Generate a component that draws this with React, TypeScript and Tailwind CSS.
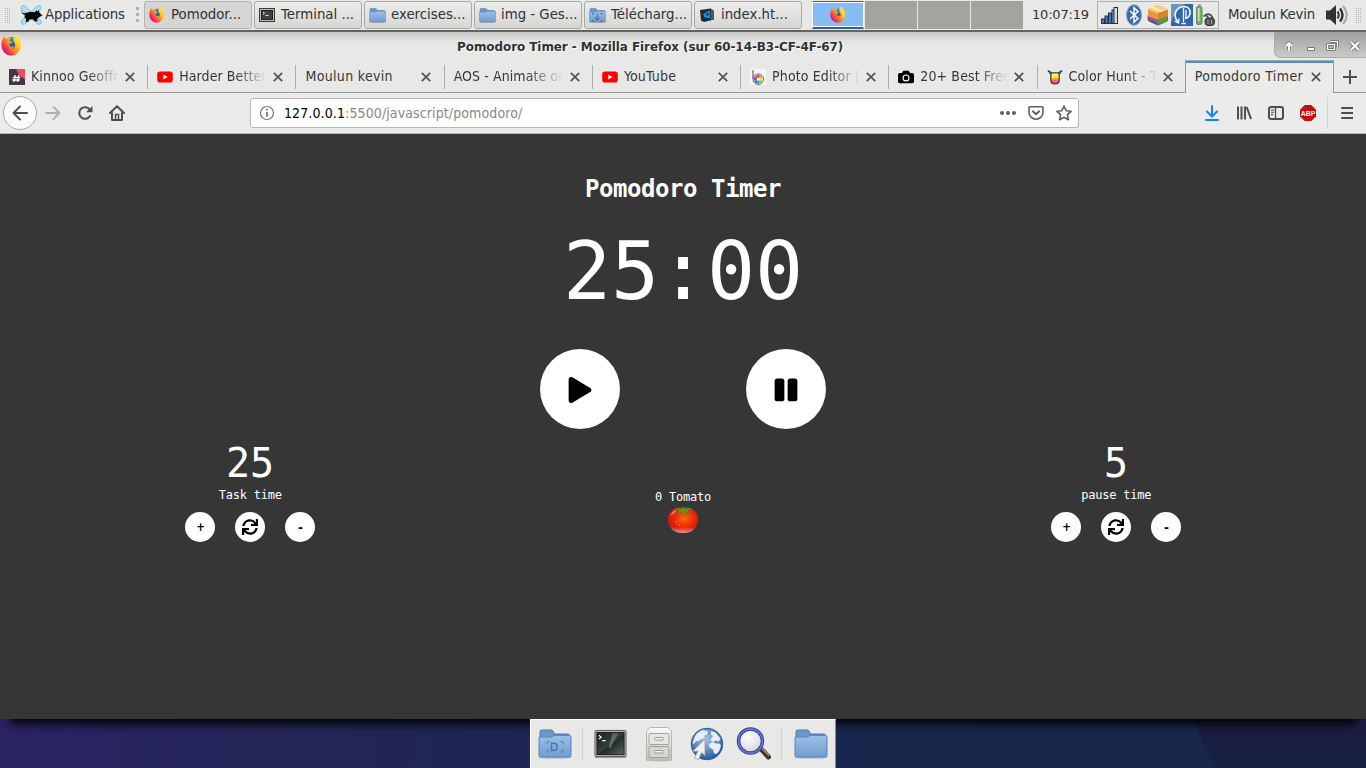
import React from "react";
import { FaPlay, FaPause, FaSync } from "react-icons/fa";

type Cls = { className?: string };

function Defs() {
  return (
    <svg className="absolute h-0 w-0" aria-hidden="true">
      <defs>
        <linearGradient id="ffOuter" x1="0.85" y1="0.1" x2="0.1" y2="0.8">
          <stop offset="0" stopColor="#fff04a" />
          <stop offset="0.35" stopColor="#ffc01e" />
          <stop offset="0.62" stopColor="#ff7a24" />
          <stop offset="0.85" stopColor="#fa2a5c" />
          <stop offset="1" stopColor="#d0108c" />
        </linearGradient>
        <linearGradient id="ffGlobe" x1="0" y1="0" x2="0.4" y2="1">
          <stop offset="0" stopColor="#12a0f0" />
          <stop offset="1" stopColor="#1a3cb0" />
        </linearGradient>
        <linearGradient id="folderFront" x1="0" y1="0" x2="0" y2="1">
          <stop offset="0" stopColor="#9dbfe6" />
          <stop offset="1" stopColor="#719dd0" />
        </linearGradient>
        <linearGradient id="termScreen" x1="0" y1="0" x2="1" y2="1">
          <stop offset="0" stopColor="#1a1f1e" />
          <stop offset="0.5" stopColor="#34403d" />
          <stop offset="0.55" stopColor="#222a28" />
          <stop offset="1" stopColor="#5b6965" />
        </linearGradient>
        <linearGradient id="cabinet" x1="0" y1="0" x2="0" y2="1">
          <stop offset="0" stopColor="#fafaf9" />
          <stop offset="1" stopColor="#bfc0bb" />
        </linearGradient>
        <radialGradient id="globe" cx="0.45" cy="0.35" r="0.65">
          <stop offset="0" stopColor="#a9c6e6" />
          <stop offset="0.6" stopColor="#5b87bd" />
          <stop offset="1" stopColor="#27559a" />
        </radialGradient>
        <radialGradient id="lens" cx="0.4" cy="0.35" r="0.7">
          <stop offset="0" stopColor="#ffffff" />
          <stop offset="1" stopColor="#cfd3d6" />
        </radialGradient>
        <radialGradient id="tomato" cx="0.55" cy="0.42" r="0.6">
          <stop offset="0" stopColor="#ff6a0c" />
          <stop offset="0.5" stopColor="#f32c08" />
          <stop offset="0.85" stopColor="#d81607" />
          <stop offset="1" stopColor="#b33a30" />
        </radialGradient>
        <linearGradient id="tomatoGloss" x1="0" y1="0" x2="0" y2="1">
          <stop offset="0.5" stopColor="#fff" stopOpacity="0" />
          <stop offset="1" stopColor="#fff" stopOpacity="0.55" />
        </linearGradient>
        <linearGradient id="hunt" x1="0" y1="0" x2="0" y2="1">
          <stop offset="0.4" stopColor="#fff200" />
          <stop offset="0.5" stopColor="#ffa02f" />
          <stop offset="0.8" stopColor="#ff4a78" />
        </linearGradient>
      </defs>
    </svg>
  );
}

function Firefox({ className }: Cls) {
  return (
    <svg viewBox="0 0 20 20" className={className}>
      <circle cx="10.3" cy="9" r="7.2" fill="url(#ffGlobe)" />
      <path d="M1.8 3.2C2 2 2.6 1.4 3 1.2c.1 1 .6 1.700 1.100 2.100 1-.4 2-.5 3-.1 1.200-.6 2.400-.5 3-.3-1 .6-1.700 1.300-1.700 2.400 .2.8 1.400.9 2.600 1-.1 1.100-1.300 1.500-2.300 2.100-.8.500-.7 1.400-.1 2.100 1.300 1.200 3.200-.2 4.600.600-1 .2-1.500 1.600-3.200 2 2.800.3 4-2 3.200-4.800-.5-1.600-1.900-2.500-1.700-4.600.1-2.200 1.300-4.200 2.700-5.600 0 1.800 1.200 3.100 2.300 4.300 1.300 1.700 2.400 3.700 2.400 6.200A9.600 9.600 0 0 1 10 19.600 9.600 9.600 0 0 1 .4 10C.4 7.300.8 4.800 1.800 3.200z" fill="url(#ffOuter)" />
    </svg>
  );
}

function Folder({ className, mark }: Cls & { mark?: "down" | "desk" }) {
  return (
    <svg viewBox="0 0 34 30" className={className}>
      <ellipse cx="17" cy="28.500" rx="16" ry="1.300" fill="#000" opacity=".2" />
      <path d="M2 7V3Q2 1 4 1H13Q15 1 15.500 3L16.500 5H30Q31.500 5 31.500 7V10H2z" fill="#6d97cb" stroke="#4a78b4" />
      <path d="M1 9Q1 8 2.200 8H12.500Q14 8 14.800 7.200T17 6.400H31.500Q33 6.400 33 8V26.500Q33 28 31.500 28H2.500Q1 28 1 26.500z" fill="url(#folderFront)" stroke="#5284c0" />
      {mark === "down" && <path d="M16.500 11v13M11 18.500l5.500 6 5.500-6M7 13v-2h3M7 24v2h3M26 13v-2h-3M26 24v2h-3" fill="none" stroke="#3568ab" strokeWidth="2" />}
      {mark === "desk" && (
        <g fill="none" stroke="#4579ba">
          <path d="M13.500 14.200h2.700q3 0 3 3.600t-3 3.600h-2.700z" strokeWidth="1.600" />
          <path d="M9 15v-2.500h2.500M9 20.500V23h2.500M25 15v-2.500h-2.500M25 20.500V23h-2.500" strokeWidth="1" strokeDasharray="2 1" />
        </g>
      )}
    </svg>
  );
}

function Terminal({ className }: Cls) {
  return (
    <svg viewBox="0 0 34 30" className={className}>
      <rect x="1" y="27" width="32" height="2.500" fill="#000" opacity=".3" />
      <rect x="1" y="1" width="32" height="27" rx="1" fill="#c3c4bf" stroke="#555753" />
      <rect x="3" y="3" width="28" height="23" fill="url(#termScreen)" stroke="#191b1a" />
      <path d="M15 19L19 4h6L17 19z" fill="#8b9996" opacity=".5" />
      <path d="M5 6l2.500 2L5 10M8.500 11.500h3.500" stroke="#fff" strokeWidth="1.200" fill="none" />
    </svg>
  );
}

function SmallTerminal({ className }: Cls) {
  return (
    <svg viewBox="0 0 16 14" className={className}>
      <rect x=".5" y=".5" width="15" height="13" fill="#babbb7" stroke="#3a3c3a" />
      <rect x="2.500" y="2.500" width="11" height="9" fill="#39423f" stroke="#1d2221" />
      <path d="M4 4l1.500 1.200L4 6.500M6.500 7.500h3" stroke="#fff" fill="none" strokeWidth=".9" />
    </svg>
  );
}

function XfceMouse({ className }: Cls) {
  return (
    <svg viewBox="0 0 22 20" className={className}>
      <path d="M3 3L18.500 17M18 3L3 17" stroke="#7cc7ea" strokeWidth="5.600" strokeLinecap="round" />
      <path d="M3 3L18.500 17M18 3L3 17" stroke="#b6e2f5" strokeWidth="3.200" strokeLinecap="round" />
      <path d="M.5 4.500C1 8 3 8.600 5 8.200 8 6.500 12 7 14.500 7L16 5l1 1.500 1.500-1.500.3 2.500L22 10.500l-3.500 1.700-2 1.800.8 2.300H14l-1.500-2-3.500.2-1 2.300H5l.7-2.700L4 12.500 4.300 10C2 9.500.5 7.500.5 4.500z" fill="#070707" />
    </svg>
  );
}

function YouTube({ className }: Cls) {
  return (
    <svg viewBox="0 0 16 12" className={className}>
      <rect x=".2" y=".4" width="15.600" height="11.200" rx="2.800" fill="#f00" />
      <path d="M6.300 3.600v4.800L10.500 6z" fill="#fff" />
    </svg>
  );
}

function Close() {
  return (
    <svg viewBox="0 0 10 10" className="h-[10px] w-[10px] shrink-0">
      <path d="M.8.8l8.400 8.400M9.200.8L.8 9.200" stroke="#4f5457" strokeWidth="1.700" />
    </svg>
  );
}

function HashIcon() {
  return (
    <svg viewBox="0 0 16 16" className="h-4 w-4">
      <path d="M0 0h16v16H0z" fill="#47344c" />
      <path d="M7 0h9v10.500C12 8 9 5 7 0z" fill="#f04c5b" />
      <path d="M6.300 6L5 13M9.800 6L8.500 13M3.800 8.500h7.500M3.300 11h7.500" stroke="#fff" strokeWidth="1.300" />
    </svg>
  );
}

function BeFunky() {
  const petals = ["#ef4136", "#f7941d", "#ffe400", "#8cc63f", "#00a99d", "#2e7bd6", "#7b3fb5", "#e83e9c"];
  return (
    <svg viewBox="0 0 16 16" className="h-4 w-4">
      <path d="M0 0h16v16H0z" fill="#f6f6fa" />
      <path d="M3 1v9" stroke="#444" strokeWidth="1" />
      <circle cx="8.300" cy="10.200" r="5.300" fill="#fff" stroke="#444" strokeWidth=".8" />
      {petals.map((c, i) => (
        <path key={c} d="M8.300 10.200L6.700 6.100A4.400 4.400 0 0 1 10 6.100z" fill={c} transform={`rotate(${i * 45} 8.300 10.200)`} />
      ))}
      <circle cx="8.300" cy="10.200" r="1.500" fill="#fff" />
    </svg>
  );
}

function CameraIcon() {
  return (
    <svg viewBox="0 0 18 16" className="h-4 w-[18px]">
      <path d="M6 1h6l1.500 2.500H16q2 0 2 2V13q0 2-2 2H2q-2 0-2-2V5.500q0-2 2-2h2.500z" fill="#000" />
      <circle cx="9" cy="9" r="3.300" fill="none" stroke="#fff" strokeWidth="1.300" />
    </svg>
  );
}

function HuntIcon() {
  return (
    <svg viewBox="0 0 16 16" className="h-4 w-4">
      <path d="M1 1.200q.5 1.800 3 2M15 1.200q-.5 1.800-3 2" stroke="#29375e" strokeWidth="1.400" fill="none" />
      <path d="M3.800 4.300h8.400v7q0 3.700-4.200 3.700t-4.200-3.700z" fill="url(#hunt)" stroke="#29375e" strokeWidth="1.200" />
      <path d="M2 4h12" stroke="#29375e" strokeWidth="1.300" />
      <path d="M5 5h6" stroke="#fff" strokeWidth="1" />
    </svg>
  );
}

function VsCode() {
  return (
    <svg viewBox="0 0 16 16" className="h-4 w-4">
      <path d="M1 3L11.500 1.500 15 4v8.500L5 15 2 13.500z" fill="#1b2a3a" />
      <path d="M11.500 1.500L15 4v8.500l-3 .8z" fill="#3f5c78" />
      <path d="M10.300 4.200v6.300L5 7.500l5.300-3.300M9.500 10.500L5 9.300" fill="none" stroke="#1593e6" strokeWidth="1.500" />
    </svg>
  );
}

const tasks: { label: string; icon: React.ReactNode; active?: boolean }[] = [
  { label: "Pomodor...", icon: <Firefox className="h-4 w-4" />, active: true },
  { label: "Terminal ...", icon: <SmallTerminal className="h-[14px] w-4" /> },
  { label: "exercises...", icon: <Folder className="h-[15px] w-[17px]" /> },
  { label: "img - Ges...", icon: <Folder className="h-[15px] w-[17px]" /> },
  { label: "Télécharg...", icon: <Folder className="h-[15px] w-[17px]" mark="down" /> },
  { label: "index.ht...", icon: <VsCode /> },
];

const tabs: { label: string; icon?: React.ReactNode; active?: boolean; fade?: boolean; spacing: string }[] = [
  { label: "Kinnoo Geoffr", icon: <HashIcon />, fade: true, spacing: "tracking-[0.08px]" },
  { label: "Harder Better", icon: <YouTube className="h-3 w-4" />, fade: true, spacing: "tracking-[0.08px]" },
  { label: "Moulun kevin", spacing: "tracking-[0.33px]" },
  { label: "AOS - Animate on", fade: true, spacing: "tracking-[0.08px]" },
  { label: "YouTube", icon: <YouTube className="h-3 w-4" />, spacing: "tracking-[0.2px]" },
  { label: "Photo Editor |", icon: <BeFunky />, fade: true, spacing: "tracking-[0.12px]" },
  { label: "20+ Best Free", icon: <CameraIcon />, fade: true, spacing: "tracking-[0.12px]" },
  { label: "Color Hunt - T", icon: <HuntIcon />, fade: true, spacing: "tracking-[0.12px]" },
  { label: "Pomodoro Timer", active: true, spacing: "tracking-[0.38px]" },
];

function Grip({ className }: Cls) {
  return (
    <svg viewBox="0 0 5 15" className={className}>
      {[0, 2, 4].map((x) => [0, 2, 4, 6, 8, 10, 12, 14].map((y) => <rect key={`${x}-${y}`} x={x} y={y} width="1" height="1" fill="#b4b4b2" />))}
    </svg>
  );
}

function Tray() {
  return (
    <div className="ml-[9px] flex h-[28px] w-[122px] shrink-0 items-center border border-[#b0b0ae]">
      <svg viewBox="0 0 17 17" className="ml-[3px] h-[17px] w-[17px] shrink-0">
        {[0, 1, 2, 3].map((i) => (
          <rect key={i} x={0.5 + i * 3.5} y={12 - i * 3} width="3" height={4.5 + i * 3} fill={i === 3 ? "#7fa0d0" : "#4a73b8"} stroke="#26303f" />
        ))}
        <rect x="13" y="0.500" width="3.500" height="16" fill="#d9dcdf" stroke="#26303f" />
      </svg>
      <svg viewBox="0 0 16 22" className="ml-[8px] h-[22px] w-4 shrink-0">
        <ellipse cx="8" cy="11" rx="7.500" ry="10.300" fill="#3b6ba8" stroke="#7f9fc6" />
        <path d="M4 7l8 7.500-4 3.700V3.800l4 3.700L4 15" fill="none" stroke="#fff" strokeWidth="1.500" />
      </svg>
      <svg viewBox="0 0 22 22" className="ml-[5px] h-[22px] w-[22px] shrink-0">
        <path d="M.5 11L10 15l11-3v4.500L11 21.500.5 16.500z" fill="#6c8f4a" />
        <path d="M1 15l10 4 10-4-1 2.500-9 4-9-4z" fill="#3e57b0" />
        <path d="M1 12l10 4 9.500-4v3L11 18.500 1 15z" fill="#a84a8c" />
        <path d="M10 17l5-3 5-1v4l-9 4z" fill="#5a9a38" />
        <path d="M1 5l9.500 4v7L1 12z" fill="#e9973a" />
        <path d="M10.500 9L21 5.500V12l-10.500 4z" fill="#d9822a" />
        <path d="M1 5l10-4.500 10 5L10.500 9z" fill="#f8cd73" />
        <path d="M5 3l10 4.300" stroke="#fff0b0" strokeWidth="2" />
      </svg>
      <svg viewBox="0 0 22 22" className="ml-[2px] h-[22px] w-[22px] shrink-0">
        <path d="M0 0h22v22H0z" fill="#2e65b0" />
        <path d="M0 0h14Q3 7 0 19z" fill="#6b95c9" />
        <path d="M7 18C1 11 5 3 13 2.500c8 0 8 11 1 12" fill="none" stroke="#fff" strokeWidth="1.700" />
        <path d="M12.500 4v14M15 6v8M10.500 19.500h4.500M3.500 17l4 2 .5-4.500" fill="none" stroke="#fff" strokeWidth="1.300" />
      </svg>
      <svg viewBox="0 0 20 22" className="ml-[2px] h-[22px] w-5 shrink-0">
        <rect x="1.500" y="2.500" width="5.500" height="18" rx="1.500" fill="#74ad60" stroke="#708e68" />
        <rect x="3" y="4" width="1.500" height="13" fill="#cdebc2" />
        <rect x="3" y=".5" width="3" height="2" fill="#8d9a88" />
        <path d="M10 11q5-2.500 8 3M8 12q5-1 5 2" fill="none" stroke="#50514f" strokeWidth="1.700" />
        <rect x="10" y="14" width="9.500" height="7.500" rx="3" fill="#555753" stroke="#2e3436" />
        <path d="M13 16v4M16.500 16v4" stroke="#a0a09e" />
      </svg>
    </div>
  );
}

function Panel() {
  return (
    <div className="flex h-8 shrink-0 items-start border-b-2 border-[#646462] bg-[#e8e8e6] pt-px font-['DejaVu_Sans'] text-[13.3px] text-[#2e3436]">
      <div className="flex h-7 w-[144px] shrink-0 items-center">
        <Grip className="ml-[5px] h-[15px] w-[5px]" />
        <XfceMouse className="ml-[10px] h-5 w-[23px]" />
        <span className="ml-[2px] w-[91px] tracking-[-0.12px]">Applications</span>
        <svg viewBox="0 0 4 16" className="h-4 w-[4px]">
          {[0, 6, 12].map((y) => <rect key={y} x="0" y={y} width="3" height="3" fill="#b0b0ae" />)}
        </svg>
      </div>
      <div className="flex gap-[2px]">
        {tasks.map((t) => (
          <div
            key={t.label}
            className={`flex h-7 w-[108px] items-center rounded-[3px] border pl-[4px] ${t.active ? "border-[#b4b4b2] bg-[#d5d5d3]" : "border-[#a8a8a6] bg-linear-to-b from-[#ededeb] to-[#d6d6d4]"}`}
          >
            <span className="flex w-[18px] justify-start">{t.icon}</span>
            <span className="ml-[4px] whitespace-nowrap">{t.label}</span>
          </div>
        ))}
      </div>
      <div className="ml-[10px] flex h-7 gap-px">
        <div className="flex w-[52px] items-center justify-center border-x border-t border-b-2 border-x-white border-y-[#356092] bg-[#86bbf5] shadow-[inset_0_1px_0_#fff,inset_0_-1px_0_#fff]">
          <Firefox className="h-4 w-4" />
        </div>
        <div className="w-[52px] bg-[#a3a49f]" />
        <div className="w-[52px] bg-[#a3a49f]" />
        <div className="w-[52px] bg-[#a3a49f]" />
      </div>
      <span className="ml-[9px] flex h-7 w-[56px] items-center text-[13px] tracking-[-0.2px]">10:07:19</span>
      <Tray />
      <span className="ml-[9px] flex h-7 w-[88px] items-center tracking-[-0.16px] whitespace-nowrap">Moulun Kevin</span>
      <div className="flex h-7 items-center">
        <svg viewBox="0 0 24 22" className="ml-[9px] h-[22px] w-6">
          <path d="M1 6.500h4L11 1v20l-6-5.500H1z" fill="#2e3436" />
          <path d="M12.500 7.500q2.500 3.500 0 7" fill="none" stroke="#2e3436" strokeWidth="2" />
          <path d="M15 4.500q5 6.500 0 13" fill="none" stroke="#2e3436" strokeWidth="2.400" />
          <path d="M18 2q7.500 9 0 18" fill="none" stroke="#a8a8a6" strokeWidth="2" />
        </svg>
        <Grip className="ml-[7px] h-[15px] w-[5px]" />
      </div>
    </div>
  );
}

function TitleBar() {
  return (
    <div className="flex h-[30px] shrink-0 items-start bg-linear-to-b from-[#c6c6c5] via-[#e4e4e2] via-30% to-[#e8e8e6] to-60%">
      <Firefox className="mt-[3px] ml-px h-[21px] w-[21px]" />
      <span className="ml-[435px] w-[386px] pt-[6px] font-['DejaVu_Sans'] text-[12px] leading-[18px] font-bold tracking-[-0.08px] whitespace-nowrap text-[#2e3436] [text-shadow:1px_1px_0_#fff]">
        Pomodoro Timer - Mozilla Firefox (sur 60-14-B3-CF-4F-67)
      </span>
      <div className="ml-auto h-[26px] w-[92px] rounded-bl-[7px] border-b border-l border-[#a8a8a6] bg-linear-to-b from-[#a0a09f] to-[#cacac8]">
        <svg viewBox="0 0 92 26" className="h-[26px] w-[92px]">
          <g strokeLinejoin="round" fill="none">
            <path d="M14 18v-6M11.500 13.500l2.500-2.500 2.500 2.500" stroke="#777" strokeWidth="3.800" />
            <path d="M14 18.500v-7M11 14l3-3 3 3" stroke="#fff" strokeWidth="1.900" />
            <rect x="32.500" y="15.500" width="7" height="3" fill="#fff" stroke="#777" />
            <path d="M55.500 9.500h7v6M52.500 12.500h7v5h-7z" stroke="#777" strokeWidth="3" />
            <path d="M55.500 9.500h7v6M52.500 12.500h7v5h-7z" stroke="#fff" strokeWidth="1.200" />
            <path d="M76 10l8 8m0-8l-8 8" stroke="#777" strokeWidth="4" />
            <path d="M76 10l8 8m0-8l-8 8" stroke="#fff" strokeWidth="2.200" />
          </g>
        </svg>
      </div>
    </div>
  );
}

function TabBar() {
  return (
    <div className="flex h-[31px] shrink-0 items-stretch bg-[#e8e8e6] font-['DejaVu_Sans_Condensed','DejaVu_Sans'] text-[14px] text-[#33393b]">
      {tabs.map((t, i) => (
        <div
          key={i}
          className={
            t.active
              ? "-mt-[2px] -ml-px flex w-[149px] shrink-0 items-center border-x border-t border-x-[#999] border-t-[#aaa9a6] bg-[#ebebe9] pb-px pl-[9px] shadow-[inset_0_2px_0_#4a90d9]"
              : "flex w-[148.220px] shrink-0 items-center border-b border-[#999] pb-[2px] pl-[9px]"
          }
        >
          {t.icon && <span className="mr-[6px] flex w-4 shrink-0 justify-center pt-[2px]">{t.icon}</span>}
          <span
            className={`overflow-hidden whitespace-nowrap ${t.icon ? "w-[88px]" : "w-[110px]"} ${t.spacing} ${t.fade ? "[mask-image:linear-gradient(to_right,black_65%,transparent_100%)]" : ""}`}
          >
            {t.label}
          </span>
          <span className={t.active ? "ml-[6px] pt-px" : "ml-[6px] pt-[2px]"}><Close /></span>
          {i < 7 && <span className="mt-[2px] ml-auto h-6 w-px shrink-0 bg-[#aeaeac]" />}
        </div>
      ))}
      <div className="flex flex-1 items-center justify-center border-b border-[#999]">
        <svg viewBox="0 0 14 14" className="h-[14px] w-[14px]">
          <path d="M7 0v14M0 7h14" stroke="#4a4f52" strokeWidth="2" />
        </svg>
      </div>
    </div>
  );
}

function NavBar() {
  return (
    <div className="flex h-[41px] shrink-0 items-center border-b border-[#b5b5b3] bg-[#ebebe9]">
      <div className="ml-[3px] flex h-[34px] w-[34px] items-center justify-center rounded-full border border-[#a9a9a7] bg-[#fbfbfb]">
        <svg viewBox="0 0 16 16" className="h-4 w-4" fill="none" stroke="#4a4f52" strokeWidth="2" strokeLinecap="round" strokeLinejoin="round">
          <path d="M15 8H1.500M8 1.500L1.500 8 8 14.500" />
        </svg>
      </div>
      <svg viewBox="0 0 16 16" className="ml-[8px] h-4 w-4" fill="none" stroke="#b0b0ae" strokeWidth="1.900" strokeLinecap="round" strokeLinejoin="round">
        <path d="M1 8h13.500M8.500 2L14.500 8l-6 6" />
      </svg>
      <svg viewBox="0 0 16 16" className="ml-[16px] h-4 w-4">
        <path d="M13 11a5.800 5.800 0 1 1-.3-6.500" fill="none" stroke="#4a4f52" strokeWidth="2" strokeLinecap="round" />
        <path d="M15.500 1v6.300H9z" fill="#4a4f52" />
      </svg>
      <svg viewBox="0 0 16 16" className="ml-[16px] h-4 w-4">
        <path d="M1 8L8 1.300 15 8M3 8v7h10V8" fill="none" stroke="#4a4f52" strokeWidth="2" strokeLinecap="round" strokeLinejoin="round" />
        <path d="M6.500 15V9.500h3V15" fill="none" stroke="#4a4f52" strokeWidth="1.500" />
      </svg>
      <div className="ml-[125px] flex h-[30px] w-[829px] items-center rounded-[3px] border border-[#b6b6b4] bg-white">
        <svg viewBox="0 0 16 16" className="ml-[8px] h-4 w-4">
          <circle cx="8" cy="8" r="6.500" fill="none" stroke="#737373" strokeWidth="1.200" />
          <path d="M8 7v4.800M8 3.800v1.800" stroke="#737373" strokeWidth="1.700" />
        </svg>
        <span className="ml-[9px] flex-1 font-['DejaVu_Sans_Condensed','DejaVu_Sans'] text-[14px] tracking-[0.11px] text-[#878787]">
          <span className="text-black">127.0.0.1</span>:5500/javascript/pomodoro/
        </span>
        <svg viewBox="0 0 16 16" className="h-4 w-4" fill="#5f5f5f">
          <circle cx="2" cy="8" r="2" /><circle cx="8" cy="8" r="2" /><circle cx="14" cy="8" r="2" />
        </svg>
        <svg viewBox="0 0 16 16" className="ml-[12px] h-4 w-4" fill="none" stroke="#5f5f5f" strokeLinecap="round" strokeLinejoin="round">
          <path d="M2 1.800h12q1 0 1 1V7.200a7 7 0 0 1-14 0V2.800q0-1 1-1z" strokeWidth="1.600" />
          <path d="M4.800 6.300L8 9.300l3.200-3" strokeWidth="1.900" />
        </svg>
        <svg viewBox="0 0 16 16" className="mr-[6px] ml-[12px] h-4 w-4" fill="none" stroke="#5f5f5f" strokeWidth="1.600" strokeLinejoin="round">
          <path d="M8 1l2.100 4.700 5 .6-3.700 3.400 1 5L8 12.200l-4.400 2.500 1-5L.9 6.300l5-.6z" />
        </svg>
      </div>
      <svg viewBox="0 0 14 16" className="ml-[126px] h-4 w-[14px]" fill="none" stroke="#0a84ff" strokeWidth="2" strokeLinecap="round" strokeLinejoin="round">
        <path d="M7 1v10M2 6.500L7 11.500l5-5M1 15h12" />
      </svg>
      <svg viewBox="0 0 16 16" className="ml-[17px] h-4 w-4" fill="none" stroke="#4a4f52" strokeWidth="2">
        <path d="M2 1.500v13M5.500 1.500v13M9 1.500v13M10.700 2l4.300 12" />
      </svg>
      <svg viewBox="0 0 16 16" className="ml-[16px] h-4 w-4" fill="none" stroke="#4a4f52">
        <rect x="1" y="2" width="14" height="12" rx="2" strokeWidth="2" />
        <path d="M7.500 2v12" strokeWidth="1.400" />
        <path d="M3 5h3M3 7.300h3M3 9.600h2" strokeWidth="1.100" />
      </svg>
      <svg viewBox="0 0 16 16" className="ml-[16px] h-4 w-4">
        <path d="M4.700 0h6.600L16 4.700v6.600L11.300 16H4.700L0 11.300V4.700z" fill="#c70d0d" />
        <text x="8" y="10.800" textAnchor="middle" fontFamily="Liberation Sans" fontWeight="700" fontSize="8" fill="#fff" textLength="14.500" lengthAdjust="spacingAndGlyphs">ABP</text>
      </svg>
      <div className="ml-[11px] h-8 w-px bg-[#d2d2d0]" />
      <svg viewBox="0 0 12 14" className="ml-[13px] h-[14px] w-3" stroke="#4a4f52" strokeWidth="2" strokeLinecap="round">
        <path d="M1 2h10.500M1 7h10.500M1 12h10.500" />
      </svg>
    </div>
  );
}

function Counter({ value, label }: { value: string; label: string }) {
  return (
    <div className="flex w-[130px] flex-col items-center">
      <span className="h-[46px] text-[40px] leading-[46px]">{value}</span>
      <span className="mt-[2px] h-[14px] pl-[0.5px] text-[12px] leading-[14px] tracking-[-0.225px]">{label}</span>
      <div className="mt-[10px] flex w-full justify-between text-black">
        <button className="flex h-[30px] w-[30px] items-center justify-center rounded-full bg-white pt-px pl-px font-['DejaVu_Sans_Condensed','DejaVu_Sans'] text-[11.5px] font-bold">+</button>
        <button className="flex h-[30px] w-[30px] items-center justify-center rounded-full bg-white"><FaSync size={16} /></button>
        <button className="flex h-[30px] w-[30px] items-center justify-center rounded-full bg-white pt-px pl-px font-['DejaVu_Sans'] text-[12px] font-bold">-</button>
      </div>
    </div>
  );
}

function Tomato() {
  return (
    <svg viewBox="0 0 32 28" className="h-7 w-8">
      <path d="M16 2C25 0 31 6 31 13.500 31 22 24 27 16 27S1 22 1 13.500C1 6 7 0 16 2z" fill="url(#tomato)" />
      <path d="M2 15q0 12 14 12t14-12z" fill="url(#tomatoGloss)" />
      <path d="M3.500 10Q5 4.500 10 3.500q-2 4-6.500 6.500z" fill="#fff" opacity=".45" />
      <path d="M9.500 15v1.500M12 18.500v1" stroke="#fff" strokeWidth="1" opacity=".5" />
      <path d="M16 3.500Q11 1 8 2.500q3 .3 4.500 2Q10 6 9 8.500q3-2.500 6-3 .5 3 3.500 5-1-3-.5-5 3.500.5 5.500 3-.5-3-3-4Q23 3 25 3.500 22 .5 17.500 3L17 1h-2z" fill="#55a51c" stroke="#347d15" strokeWidth=".4" />
    </svg>
  );
}

function Page() {
  return (
    <main className="flex h-[585px] shrink-0 flex-col bg-[#363636] font-['DejaVu_Sans_Mono'] text-white">
      <h1 className="mt-[41px] h-7 text-center text-[24px] leading-7 font-bold tracking-[-0.45px]">Pomodoro Timer</h1>
      <div className="mt-[22px] h-[93px] text-center text-[80px] leading-[93px] tracking-[-0.16px]">25:00</div>
      <div className="mt-[31px] flex justify-center gap-[126px] text-black">
        <button className="flex h-20 w-20 items-center justify-center rounded-full bg-white pt-px"><FaPlay size={26} /></button>
        <button className="flex h-20 w-20 items-center justify-center rounded-full bg-white pt-px"><FaPause size={26} /></button>
      </div>
      <div className="mt-[11px] flex items-start justify-between px-[185px]">
        <Counter value="25" label="Task time" />
        <div className="flex flex-col items-center pt-[50px]">
          <span className="h-[14px] text-[12px] leading-[14px] tracking-[-0.225px]">0 Tomato</span>
          <div className="mt-[2px]"><Tomato /></div>
        </div>
        <Counter value="5" label="pause time" />
      </div>
    </main>
  );
}

function Dock() {
  return (
    <div className="flex h-[49px] w-[306px] items-center border-t border-r border-l border-t-white border-r-[#8b8b8b] border-l-white bg-[#e8e8e6] pl-[7px]">
      <Folder className="h-[30px] w-[34px]" mark="desk" />
      <div className="ml-[10px] h-[34px] w-px bg-[#d0d0ce]" />
      <Terminal className="ml-[11px] h-[30px] w-[33px]" />
      <svg viewBox="0 0 28 36" className="ml-[18px] h-[36px] w-7">
        <ellipse cx="14" cy="34" rx="13.500" ry="1.500" fill="#000" opacity=".2" />
        <path d="M5 1.500h18l3.500 4V34h-25V5.500z" fill="url(#cabinet)" stroke="#b4b5b1" />
        <rect x="4" y="7.500" width="20" height="11" rx="1" fill="#e6e6e3" stroke="#a5a6a2" />
        <rect x="4" y="20.500" width="20" height="11" rx="1" fill="#d5d6d2" stroke="#a0a19c" />
        <rect x="9.500" y="11.500" width="9" height="2.500" rx="1" fill="#f6f6f5" stroke="#868782" strokeWidth=".8" />
        <rect x="9.500" y="24.500" width="9" height="2.500" rx="1" fill="#f0f0ee" stroke="#868782" strokeWidth=".8" />
      </svg>
      <svg viewBox="0 0 34 34" className="ml-[17px] h-[34px] w-[34px]">
        <circle cx="17" cy="17" r="15.800" fill="url(#globe)" stroke="#2f5b9b" />
        <path d="M4 12Q6 5.500 13 3l5 1.500-1 3-2.500 1-.5 2.500-3 1-2.500 2-2.500 0-1.500 2.500-2 0zM21 4l4.500 1.500 5 6-1.500 3-3.500-1-2.500 1.500-2.500-1.500 1-3 1.500-1-2-2zM19 17l3.500-2 3.500 1.500 3.500 0 1.500 2-1.500 5-3 3.500-2.500-.5-1-4-3.500-2z" fill="#e6edf4" />
        <path d="M15 12L2.500 24.500l5.500-.5L4.500 31l4 1.500 3-7L15 28.500z" fill="#f0f0f0" stroke="#9a9b99" strokeWidth=".8" />
      </svg>
      <svg viewBox="0 0 36 34" className="ml-[12px] h-[34px] w-9">
        <path d="M25.500 22.500l7 7.500" stroke="#41362e" strokeWidth="5" strokeLinecap="round" />
        <path d="M25.500 21l7.500 7.500" stroke="#a7957d" strokeWidth="1.500" />
        <circle cx="14.500" cy="14" r="12" fill="url(#lens)" stroke="#34429a" strokeWidth="3.500" />
        <circle cx="14.500" cy="14" r="12" fill="none" stroke="#6a78cc" strokeWidth="1.500" />
      </svg>
      <div className="ml-[9px] h-[34px] w-px bg-[#d0d0ce]" />
      <Folder className="ml-[12px] h-[30px] w-[34px]" />
    </div>
  );
}

function Desktop() {
  return (
    <div className="relative flex h-[49px] shrink-0 justify-center overflow-hidden bg-[linear-gradient(90deg,#2b2362_0%,#232558_20%,#1c2754_45%,#17274c_65%,#172749_80%,#17264c_100%)]">
      <svg viewBox="0 0 1366 49" className="absolute inset-0 h-[49px] w-[1366px]">
        <defs>
          <linearGradient id="wall" x1="0" y1="0" x2="0" y2="1">
            <stop offset="0" stopColor="#1c1a42" />
            <stop offset="1" stopColor="#15233f" />
          </linearGradient>
        </defs>
        <path d="M1192 0H1366V49H1216z" fill="url(#wall)" />
      </svg>
      <div className="absolute -top-[10px] right-[14px] left-[14px] h-[10px] shadow-[0_1px_10px_4px_rgba(0,0,0,0.95)]" />
      <div className="relative"><Dock /></div>
    </div>
  );
}

export default function App() {
  return (
    <div className="flex h-[768px] w-[1366px] flex-col overflow-hidden">
      <Defs />
      <Panel />
      <TitleBar />
      <TabBar />
      <NavBar />
      <Page />
      <Desktop />
    </div>
  );
}
